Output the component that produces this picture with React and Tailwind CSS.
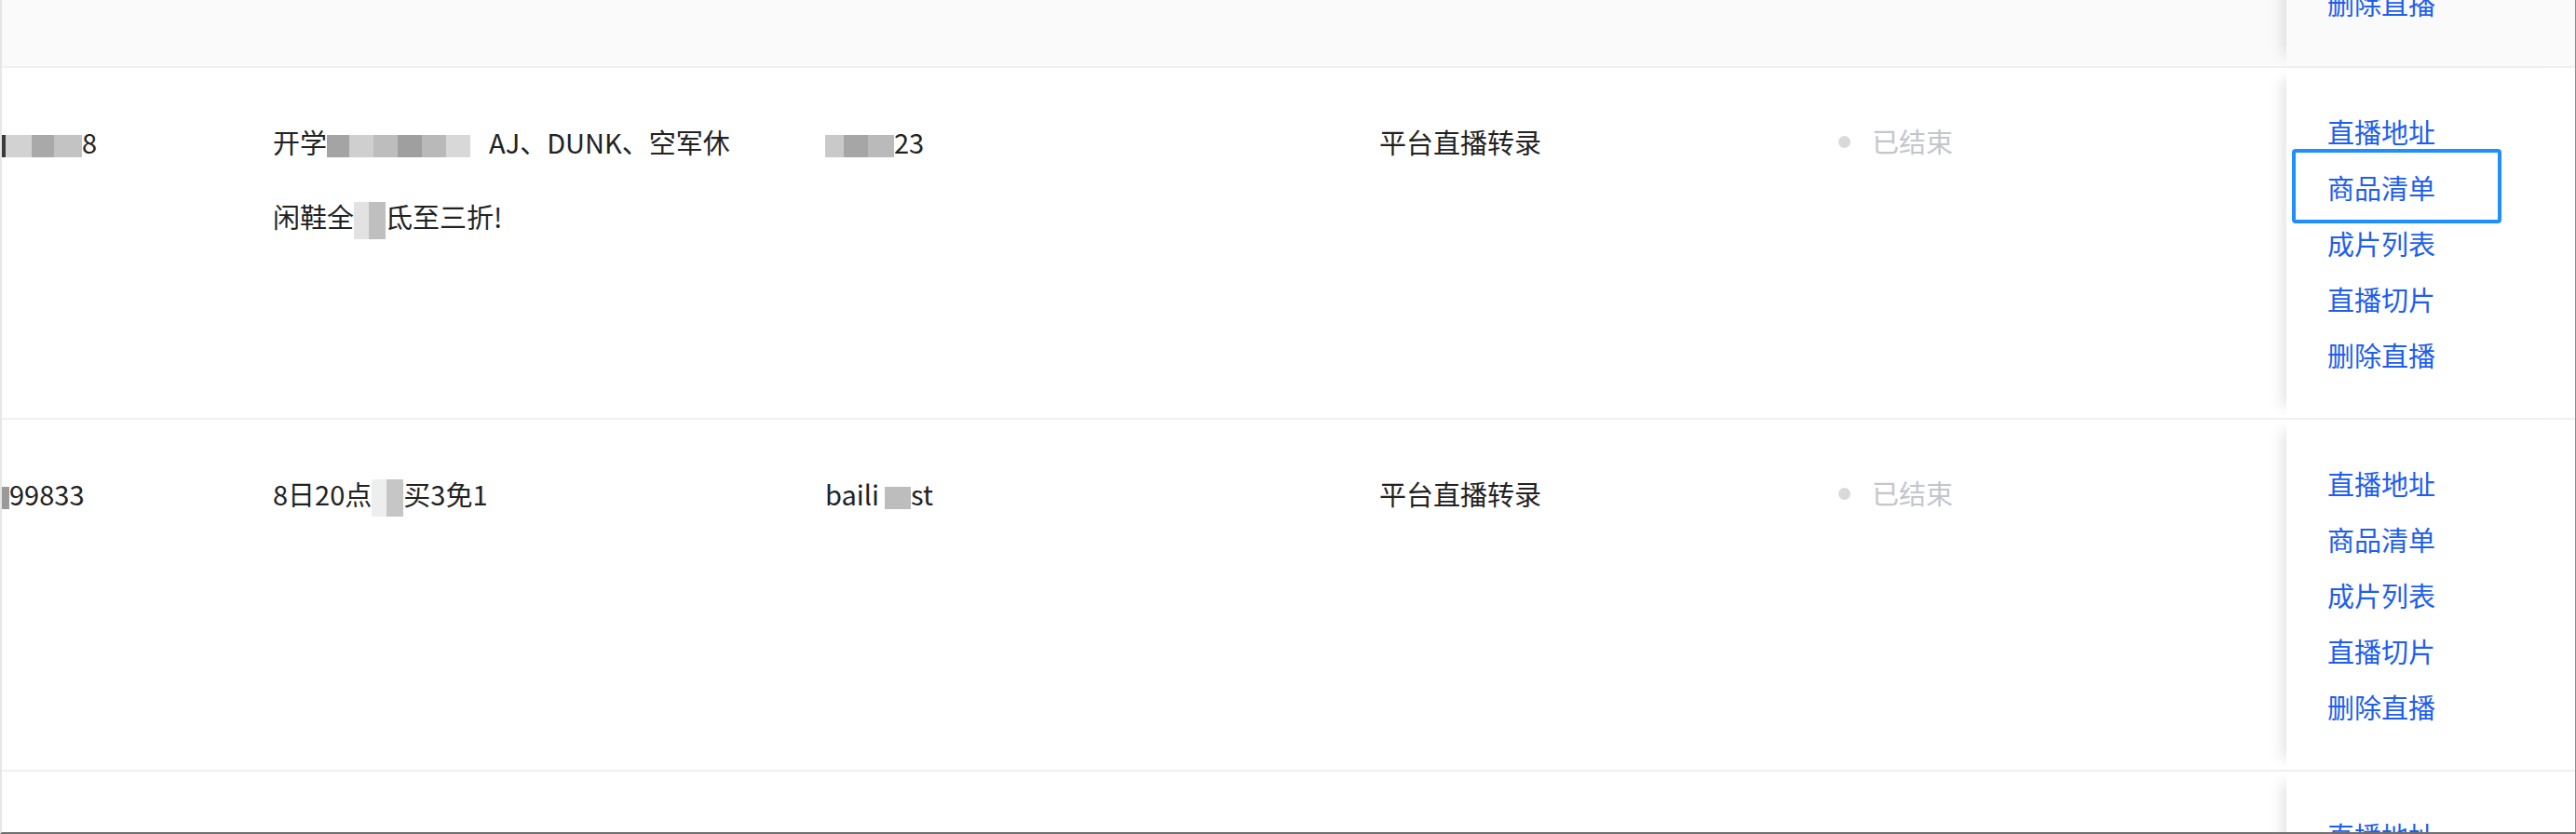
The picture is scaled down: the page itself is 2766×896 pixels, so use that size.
import { useState } from 'react';

const ACTIONS = ['直播地址', '商品清单', '成片列表', '直播切片', '删除直播'];

// pixelated (mosaic) part of the screenshot
function Blur({ blocks, tall }) {
  return (
    <span className={`inline-flex align-middle ${tall ? 'h-[40px]' : 'h-[24px]'}`}>
      {blocks.map((cls, i) => (
        <span key={i} className={`h-full ${cls}`} />
      ))}
    </span>
  );
}

// first and last rows are only partly in view: their text cells sit outside the window
const ROWS = [
  { id: 'top', hover: true, code: null, title: [], anchor: null, type: '', status: '' },
  {
    id: 'r2',
    code: (
      <>
        <Blur blocks={['w-[4px] bg-[#3a3a3a]', 'w-[28px] bg-[#d2d2d2]', 'w-[24px] bg-[#a9a9a9]', 'w-[30px] bg-[#c3c3c3]']} />
        8
      </>
    ),
    title: [
      <>
        开学
        <Blur blocks={['w-[24px] bg-[#a4a4a4]', 'w-[26px] bg-[#cfcfcf]', 'w-[26px] bg-[#bdbdbd]', 'w-[26px] bg-[#9f9f9f]', 'w-[26px] bg-[#b9b9b9]', 'w-[26px] bg-[#d8d8d8]']} />
        <span className="ml-[20px]">AJ、DUNK、空军休</span>
      </>,
      <>
        闲鞋全
        <Blur tall blocks={['w-[16px] bg-[#e2e2e2]', 'w-[18px] bg-[#bfbfbf]']} />
        氐至三折!
      </>,
    ],
    anchor: (
      <>
        <Blur blocks={['w-[20px] bg-[#c9c9c9]', 'w-[26px] bg-[#a6a6a6]', 'w-[28px] bg-[#bababa]']} />
        23
      </>
    ),
    type: '平台直播转录',
    status: '已结束',
    focus: true,
  },
  {
    id: 'r3',
    code: (
      <>
        <Blur blocks={['w-[8px] bg-[#9a9a9a]']} />
        99833
      </>
    ),
    title: [
      <>
        8日20点
        <Blur tall blocks={['w-[16px] bg-[#eeeeee]', 'w-[18px] bg-[#c6c6c6]']} />
        买3免1
      </>,
    ],
    anchor: (
      <>
        baili
        <Blur blocks={['w-[6px] bg-white', 'w-[28px] bg-[#bdbdbd]']} />
        st
      </>
    ),
    type: '平台直播转录',
    status: '已结束',
  },
  { id: 'r4', code: null, title: [], anchor: null, type: '', status: '' },
];

function Row({ row }) {
  return (
    <div className={`flex h-[378px] shrink-0 border-b-2 border-[#f0f0f0] ${row.hover ? 'bg-[#fafafa]' : 'bg-white'}`}>
      <div className="w-[291px] shrink-0 whitespace-nowrap pt-[39px] leading-[80px]">{row.code}</div>
      <div className="w-[593px] shrink-0 whitespace-nowrap pt-[39px] leading-[80px]">
        {row.title.map((line, i) => (
          <div key={i}>{line}</div>
        ))}
      </div>
      <div className="w-[595px] shrink-0 whitespace-nowrap pt-[39px] leading-[80px]">{row.anchor}</div>
      <div className="w-[493px] shrink-0 pt-[39px] leading-[80px]">{row.type}</div>
      <div className="mt-[39px] flex h-[80px] w-[481px] shrink-0 items-center gap-[23px]">
        {row.status && (
          <>
            <span className="h-[13px] w-[13px] rounded-full bg-[#d9d9d9]" />
            <span className="text-[#c3c6cd]">{row.status}</span>
          </>
        )}
      </div>
      <div className={`flex w-[310px] shrink-0 flex-col justify-center pl-[44px] shadow-[-16px_0_14px_-12px_rgba(0,0,0,0.12)] ${row.hover ? 'bg-[#fafafa]' : 'bg-white'}`}>
        {ACTIONS.map((label, i) => (
          <a key={label} className="relative block w-fit cursor-pointer leading-[60px] text-[#1e5ef0]">
            {label}
            {row.focus && i === 1 && (
              <span className="pointer-events-none absolute left-[-38px] top-[-11px] h-[80px] w-[225px] rounded-[4px] border-[4px] border-[#1f8fff]" />
            )}
          </a>
        ))}
      </div>
    </div>
  );
}

export default function App() {
  const [rows] = useState(ROWS);

  return (
    <div className="h-[896px] w-full overflow-hidden border-b-2 border-l-2 border-r border-b-[#6f6f6f] border-l-[#e6e6e6] border-r-[#8c8c8c] bg-white font-['PingFang_SC','Noto_Sans_CJK_SC',sans-serif] text-[29px] text-[#222222]">
      <div className="mt-[-305px] flex flex-col">
        {rows.map((row) => (
          <Row key={row.id} row={row} />
        ))}
      </div>
    </div>
  );
}
